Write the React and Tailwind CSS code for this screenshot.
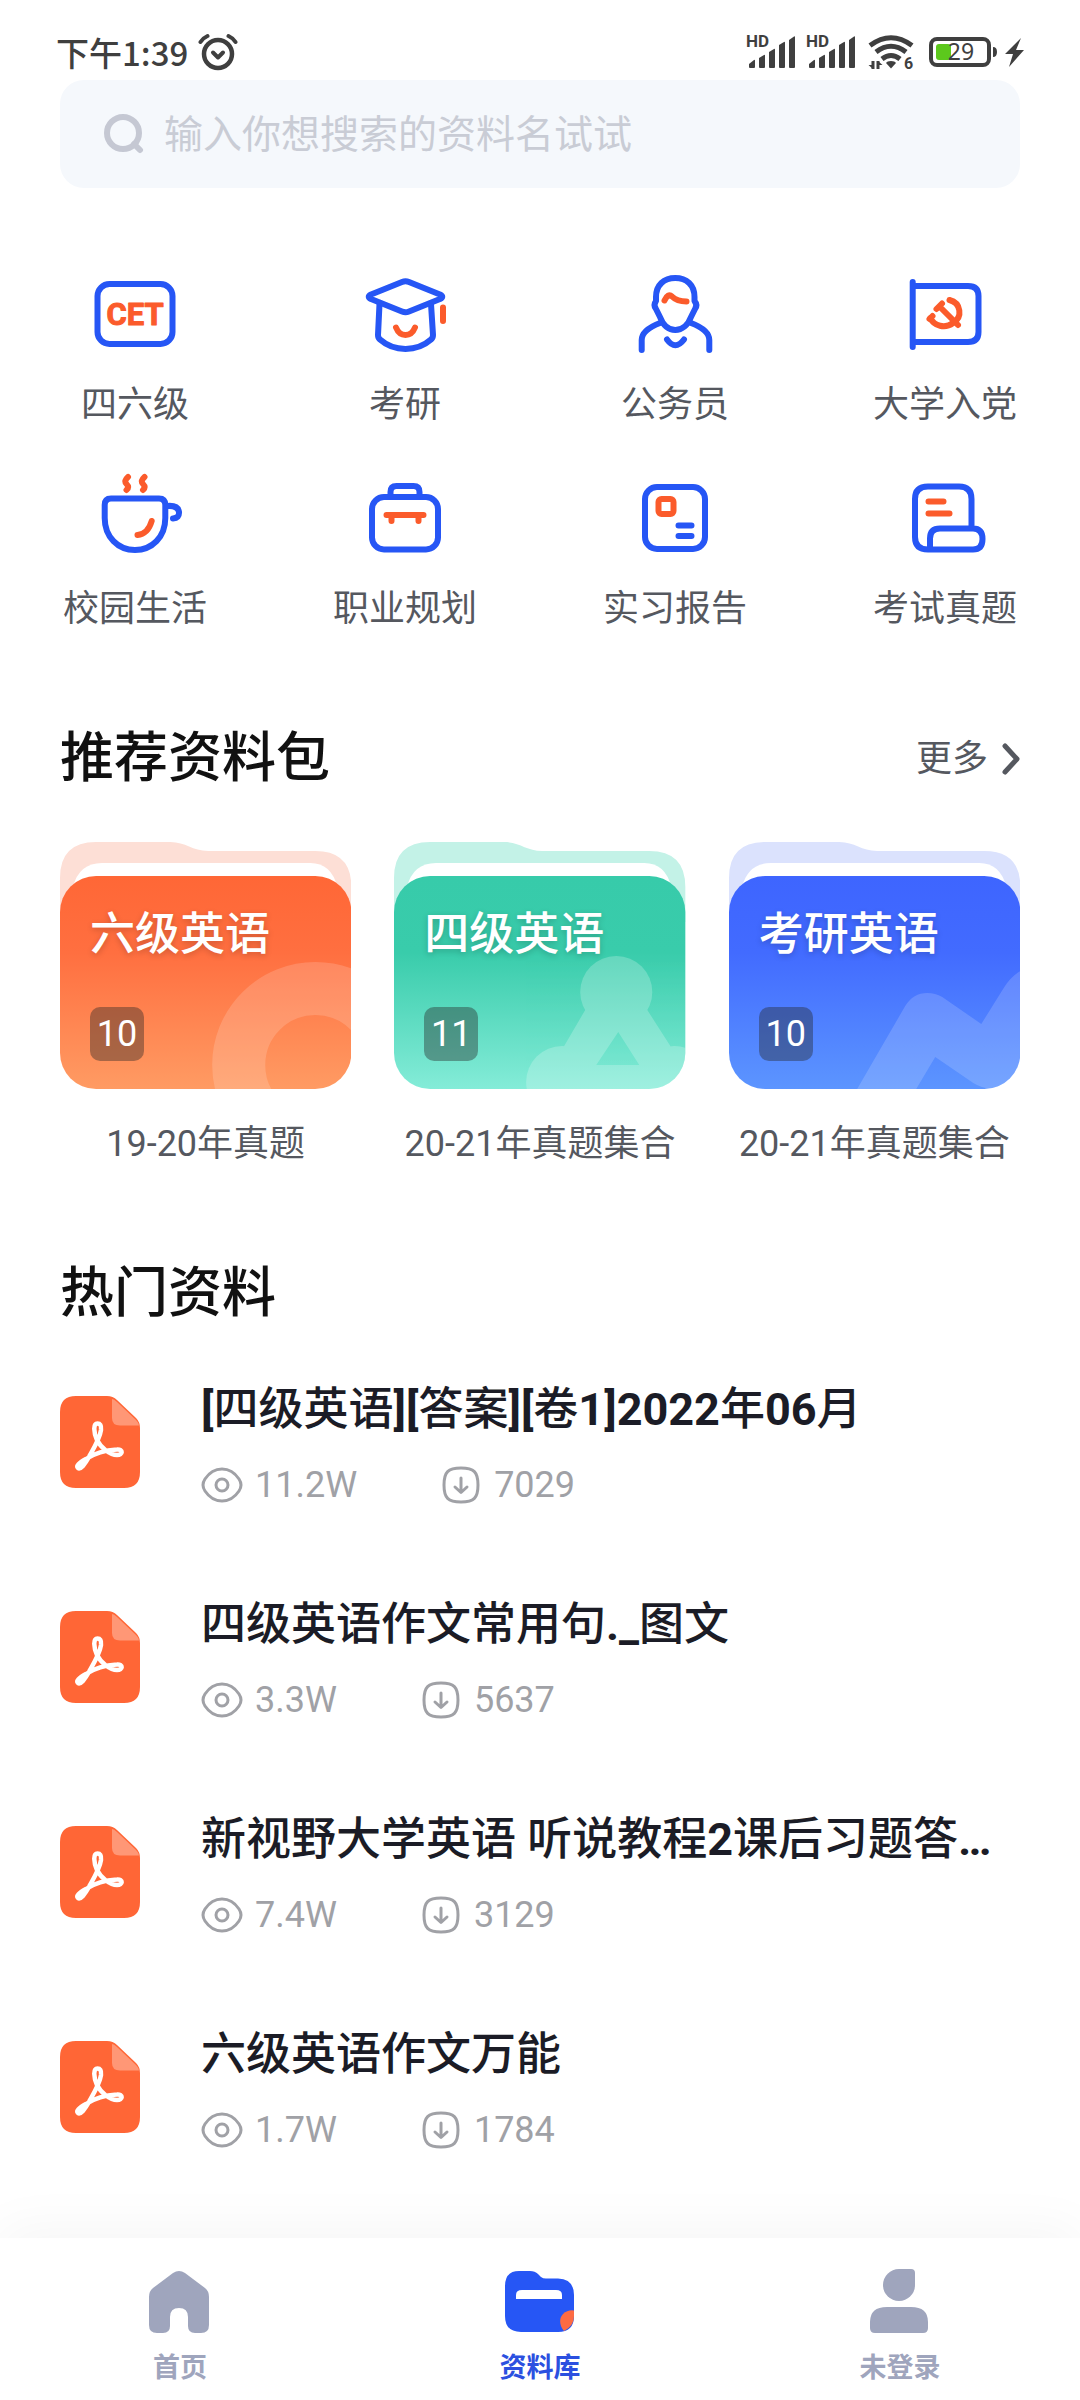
import React from 'react';

const BLUE = '#2656f5';
const ORANGE = '#fb5b2b';

// ---------- status bar ----------

const AlarmIcon = () => (
  <svg viewBox="0 0 40 38" className="h-[38px] w-10" fill="none" stroke="#3f3f3f" strokeLinecap="round" strokeLinejoin="round">
    <circle cx="20" cy="21" r="14" strokeWidth="4.500" />
    <path d="M15 19.500l5 5 5-5" strokeWidth="4" />
    <path d="M2.500 9Q5 5 9.500 3M37.500 9Q35 5 30.500 3" strokeWidth="4" />
  </svg>
);

const SignalIcon = () => (
  <svg viewBox="0 -8 50 50" className="h-[50px] w-[50px]" fill="#3f3f3f">
    <text x="0" y="12" fontFamily="Roboto, sans-serif" fontSize="17" fontWeight="700">HD</text>
    <path d="M3 29l5-4q1-.5 1 .5V32q0 1-1 1H4q-1 0-1-1z" />
    <path d="M13 23l5-3q1-.5 1 .5V32q0 1-1 1h-4q-1 0-1-1z" />
    <path d="M23 17l5-3q1-.5 1 .5V32q0 1-1 1h-4q-1 0-1-1z" />
    <path d="M33 10l5-3q1-.5 1 .5V32q0 1-1 1h-4q-1 0-1-1z" />
    <path d="M43 5l5-3.500q1-.5 1 .5V32q0 1-1 1h-4q-1 0-1-1z" />
  </svg>
);

const WifiIcon = () => (
  <svg viewBox="0 -8 46 50" className="h-[50px] w-[46px]" fill="none" stroke="#3f3f3f" strokeWidth="5">
    <path d="M2 10.500Q23-5 44 10.500M8 17Q23 5.500 38 17M14 24Q23 17 32 24" />
    <path d="M23 26q4 0 5 2l-5 5.500-5-5.500q1-2 5-2z" fill="#3f3f3f" stroke="none" />
    <path d="M5 26v8l-4.500-4H5M10 34v-8l4.500 4H10" fill="#3f3f3f" stroke="none" />
    <path d="M5 26v8M10 26v8" strokeWidth="3" />
    <text x="36" y="34" fill="#3f3f3f" stroke="none" fontFamily="Roboto, sans-serif" fontSize="16" fontWeight="700">6</text>
  </svg>
);

const BatteryIcon = () => (
  <svg viewBox="0 0 96 34" className="h-[34px] w-24">
    <rect x="2" y="4" width="58" height="26" rx="6" fill="none" stroke="#3f3f3f" strokeWidth="4" />
    <rect x="7" y="9" width="15" height="16" rx="3" fill="#5cc81c" />
    <path d="M64 12q4 0 4 5t-4 5z" fill="#3f3f3f" />
    <text x="32" y="25" textAnchor="middle" fill="#3f3f3f" fontFamily="Noto Sans, sans-serif" fontSize="23">29</text>
    <path d="M92 3L76 19h8l-4 13 15-17h-8z" fill="#3f3f3f" />
  </svg>
);

const StatusBar = () => (
  <div className="flex h-20 items-center justify-between pt-6 pr-[55px] pl-14 text-[#3f3f3f]">
    <div className="flex items-center gap-[10px] text-[33px] leading-[50px] font-medium">
      <span className="font-['Noto_Sans_CJK_SC',sans-serif]">下午1:39</span>
      <AlarmIcon />
    </div>
    <div className="flex items-center">
      <SignalIcon />
      <span className="w-[10px]" />
      <SignalIcon />
      <span className="w-3" />
      <WifiIcon />
      <span className="w-[15px]" />
      <BatteryIcon />
    </div>
  </div>
);

// ---------- search ----------

const SearchBox = () => (
  <div className="px-[60px]">
    <label className="flex h-[108px] items-center gap-5 rounded-3xl bg-[#f5f8fc] px-11">
      <svg viewBox="0 1 40 40" className="h-10 w-10 shrink-0" fill="none" stroke="#c5c8d3" strokeWidth="6" strokeLinecap="round">
        <circle cx="19" cy="20" r="16" />
        <path d="M30 31l6 6" />
      </svg>
      <input
        type="text"
        aria-label="搜索"
        placeholder="输入你想搜索的资料名试试"
        className="min-w-0 flex-1 bg-transparent pt-[2px] text-[39px] leading-[56px] text-[#3f3f3f] outline-none placeholder:text-[#c9ccd5]"
      />
    </label>
  </div>
);

// ---------- categories ----------

const CategoryIcon = ({ children }) => (
  <svg
    viewBox="0 0 88 88"
    className="h-[88px] w-[88px] overflow-visible"
    fill="none"
    stroke={BLUE}
    strokeWidth="6"
    strokeLinecap="round"
    strokeLinejoin="round"
  >
    {children}
  </svg>
);

const categories = [
  {
    name: '四六级',
    icon: (
      <>
        <rect x="6.500" y="14" width="75" height="60" rx="12" />
        <text x="44" y="55" textAnchor="middle" fill={ORANGE} stroke={ORANGE} strokeWidth="1" fontFamily="Roboto, sans-serif" fontSize="31" fontWeight="700">CET</text>
      </>
    ),
  },
  {
    name: '考研',
    icon: (
      <>
        <path d="M18.500 34L17 65Q17 68 19 69.500C33 82 56 82 70 69.500Q72 68 72 65L70 34" />
        <path fill="#fff" d="M41 12Q44.500 10.500 48 12L79 24.500Q83.500 26.700 79 29L48 41.500Q44.500 43 41 41.500L10 29Q5.500 26.700 10 24.500Z" />
        <path stroke={ORANGE} d="M35 57.500Q38 65 44.500 65T54 57.500M82 37.500v13.500" />
      </>
    ),
  },
  {
    name: '公务员',
    icon: (
      <>
        <path d="M25 31V27C25 15 33 8 44.300 8S63.500 15 63.500 27V31Q67 35 64 39L60 47C57 55 51 60 44.300 60S32 55 29 47L25 39Q22 35 25 31Z" />
        <path d="M29 53Q10.700 60 10.700 70V80M60 53Q78.300 60 78.300 70V80M36 69.500Q44.300 81 53 69.500" />
        <path stroke={ORANGE} d="M33.500 30.500Q37 23 41 26.500Q46 31.500 55.500 31.500" />
      </>
    ),
  },
  {
    name: '大学入党',
    icon: (
      <>
        <path d="M11.700 12V77M11.700 16H67Q77.500 16 77.500 26V62Q77.500 72 67 72H11.700" />
        <path stroke={ORANGE} d="M48.500 30C60 33 62 47 52 53C44 59 33 56 29.500 48" />
        <path stroke={ORANGE} strokeWidth="6" d="M35.500 39L41 33.500M39 37L57 55M28.500 49l3-3" />
      </>
    ),
  },
  {
    name: '校园生活',
    icon: (
      <>
        <path d="M20 24.500H68Q74.300 24.500 74.300 31V44C74.300 63 61 76 44 76S13.700 63 13.700 44V31Q13.700 24.500 20 24.500Z" />
        <path d="M76 32Q87 31 88 38Q88.500 44 82 44.500" />
        <path stroke={ORANGE} d="M37 3q-4.500 4-1.500 7t0 6M53.500 3q-4.500 4-1.500 7t0 6M60.700 47Q57 60 46.500 61" />
      </>
    ),
  },
  {
    name: '职业规划',
    icon: (
      <>
        <rect x="11" y="23" width="66" height="52.500" rx="12" />
        <path d="M29.500 22V18Q29.500 12 35.500 12H52.500Q58.500 12 58.500 18V22" />
        <path stroke={ORANGE} d="M25.500 41H62.500M30.500 42v5M57.500 42v5" />
      </>
    ),
  },
  {
    name: '实习报告',
    icon: (
      <>
        <rect x="14" y="13" width="60" height="62" rx="12" />
        <rect x="27.500" y="25" width="15" height="15" rx="3" stroke={ORANGE} />
        <path d="M47.500 51.500H60.500M47.500 62H60.500" />
      </>
    ),
  },
  {
    name: '考试真题',
    icon: (
      <>
        <path d="M70.500 54V25Q70.500 12.500 58 12.500H27Q14 12.500 14 25V63Q14 75.500 27 75.500H72Q81.500 75.500 81.500 65T72 54.500H39Q29 54.500 29 64.500V75" />
        <path stroke={ORANGE} d="M27.500 27.500H42.500M27.500 39.500H48.500" />
      </>
    ),
  },
];

const Categories = () => (
  <nav className="mt-[82px] grid grid-cols-4 gap-y-11">
    {categories.map((c) => (
      <a key={c.name} href="#" className="flex flex-col items-center gap-[22px] text-[36px] leading-[50px] text-[#55585f]">
        <CategoryIcon>{c.icon}</CategoryIcon>
        {c.name}
      </a>
    ))}
  </nav>
);

// ---------- recommended packs ----------

const packs = [
  {
    id: 'cet6',
    title: '六级英语',
    count: 10,
    desc: '19-20年真题',
    back: '#fddfd6',
    stops: ['#ff6736', '#ff6f40', '#ff9b63'],
    art: <circle cx="255" cy="223" r="76.500" fill="none" stroke="#fff" strokeWidth="53" opacity=".16" />,
  },
  {
    id: 'cet4',
    title: '四级英语',
    count: 11,
    desc: '20-21年真题集合',
    back: '#c3f2e7',
    stops: ['#37cbaa', '#39ccab', '#84ecd8'],
    art: (
      <g fill="#fff" opacity=".22">
        <circle cx="222" cy="150" r="36" />
        <circle cx="168" cy="240" r="36" />
        <circle cx="280" cy="240" r="36" />
        <path fillRule="evenodd" d="M191 168L170 204V250H280L276 204L253 168ZM224 190L202 223H245Z" />
      </g>
    ),
  },
  {
    id: 'kaoyan',
    title: '考研英语',
    count: 10,
    desc: '20-21年真题集合',
    back: '#dbe2fd',
    stops: ['#3e65ff', '#426bff', '#5c95ff'],
    art: (
      <path
        fill="#fff"
        opacity=".16"
        d="M128 247L176 164Q184 151 198 151Q206 151 213 155L252 182L275 145Q282 134 291 129V247H262Q252 246 244 241L206 215L187 247Z"
      />
    ),
  },
];

const FolderArt = ({ pack }) => (
  <svg viewBox="0 0 291 247" preserveAspectRatio="none" className="absolute inset-0 h-full w-full">
    <defs>
      <linearGradient id={`fill-${pack.id}`} x1="0" y1="0" x2="0" y2="1">
        <stop offset="0" stopColor={pack.stops[0]} />
        <stop offset=".36" stopColor={pack.stops[1]} />
        <stop offset="1" stopColor={pack.stops[2]} />
      </linearGradient>
      <clipPath id={`clip-${pack.id}`}>
        <rect y="34" width="291" height="213" rx="36" />
      </clipPath>
    </defs>
    <path fill={pack.back} d="M0 80V36Q0 0 36 0H110C126 0 132 9 148 9H255Q291 9 291 45V80Z" />
    <path fill="#fff" d="M13 60V45Q19 21 42 21H250Q271 21 277 45V60Z" />
    <rect y="34" width="291" height="213" rx="36" fill={`url(#fill-${pack.id})`} />
    <g clipPath={`url(#clip-${pack.id})`}>{pack.art}</g>
  </svg>
);

const PackCard = ({ pack }) => (
  <a href="#" className="block">
    <div className="relative flex h-[247px] flex-col items-start justify-between px-[30px] pt-[62px] pb-7 text-white">
      <FolderArt pack={pack} />
      <h3 className="relative text-[45px] leading-[62px] font-medium [text-shadow:0_2px_6px_rgba(0,0,0,0.2)]">
        {pack.title}
      </h3>
      <span className="relative flex h-[54px] min-w-[54px] items-center justify-center rounded-[10px] bg-[#252525]/40 text-[36px] leading-[50px]">
        {pack.count}
      </span>
    </div>
    <p className="mt-[30px] text-center text-[36px] leading-[50px] whitespace-nowrap text-[#55585f]">{pack.desc}</p>
  </a>
);

const Recommended = () => (
  <section className="mt-[89px] px-[60px]">
    <div className="flex items-center justify-between">
      <h2 className="text-[54px] leading-[72px] font-medium text-[#111]">推荐资料包</h2>
      <a href="#" className="flex items-center gap-[14px] text-[36px] leading-[50px] text-[#55585f]">
        更多
        <svg viewBox="0 0 18 32" className="h-8 w-[18px]" fill="none" stroke="#55585f" strokeWidth="5" strokeLinecap="round" strokeLinejoin="round">
          <path d="M3 3l12 13L3 29" />
        </svg>
      </a>
    </div>
    <div className="mt-[47px] grid grid-cols-3 gap-[43px]">
      {packs.map((p) => (
        <PackCard key={p.id} pack={p} />
      ))}
    </div>
  </section>
);

// ---------- hot documents ----------

const docs = [
  { title: '[四级英语][答案][卷1]2022年06月', views: '11.2W', downloads: '7029' },
  { title: '四级英语作文常用句._图文', views: '3.3W', downloads: '5637' },
  { title: '新视野大学英语 听说教程2课后习题答…', views: '7.4W', downloads: '3129' },
  { title: '六级英语作文万能', views: '1.7W', downloads: '1784' },
];

const PdfIcon = () => (
  <svg viewBox="0 0 80 92" className="mt-4 h-[92px] w-20 shrink-0">
    <path fill="#ff6636" d="M16 0H47Q53 0 57 4L76 22Q80 26 80 32V76Q80 92 64 92H16Q0 92 0 76V16Q0 0 16 0Z" />
    <path fill="#ff9776" d="M52 3Q54 3 57 6L76 24Q79 27 79 29.500H60Q52 29.500 52 22Z" />
    <path
      fill="none"
      stroke="#fff"
      strokeWidth="4.500"
      strokeLinejoin="round"
      d="M37.500 27.500C33 27.500 33.500 36 37 44C41 52 50 59 57 59C63 59 63.500 53 57 53.500C46 54 35 57 26 63C19 67 15.500 70 18 72C20.500 74 25 68 29 61C34 52 40 42 41 34C41.500 29 40 27.500 37.500 27.500Z"
    />
  </svg>
);

const EyeIcon = () => (
  <svg viewBox="0 0 42 38" className="h-[38px] w-[42px]" fill="none" stroke="#a0a1a6" strokeWidth="3">
    <path d="M21 3C29 3 34 7 38 13Q42 19 38 25C34 31 29 35 21 35S8 31 4 25Q0 19 4 13C8 7 13 3 21 3Z" />
    <circle cx="21" cy="19" r="6" />
  </svg>
);

const DownloadIcon = () => (
  <svg viewBox="0 0 38 38" className="h-[38px] w-[38px]" fill="none" stroke="#a0a1a6" strokeWidth="3" strokeLinecap="round" strokeLinejoin="round">
    <path d="M19 2C32 2 36 6 36 19S32 36 19 36S2 32 2 19S6 2 19 2Z" />
    <path d="M19 12V26M13 21l6 5.500L25 21" />
  </svg>
);

// latin runs are set bolder than the chinese around them
const DocTitle = ({ text }) => (
  <h3 className="truncate text-[45px] leading-[60px] font-medium text-[#1b1c26]">
    {text.split(/([\x21-\x7e…]+)/).map((part, i) =>
      i % 2 ? <span key={i} className="font-bold">{part}</span> : part
    )}
  </h3>
);

const DocRow = ({ doc }) => (
  <li>
    <a href="#" className="flex items-start gap-[61px]">
      <PdfIcon />
      <div className="min-w-0 flex-1">
        <DocTitle text={doc.title} />
        <div className="mt-5 flex items-center gap-[85px] text-[36px] leading-[50px] text-[#a0a1a6]">
          <span className="flex items-center gap-3">
            <EyeIcon />
            {doc.views}
          </span>
          <span className="flex items-center gap-[14px]">
            <DownloadIcon />
            {doc.downloads}
          </span>
        </div>
      </div>
    </a>
  </li>
);

const HotDocs = () => (
  <section className="mt-[89px] px-[60px] pb-20">
    <h2 className="text-[54px] leading-[72px] font-medium text-[#111]">热门资料</h2>
    <ul className="mt-[50px] flex flex-col gap-[85px]">
      {docs.map((d) => (
        <DocRow key={d.title} doc={d} />
      ))}
    </ul>
  </section>
);

// ---------- bottom tabs ----------

const tabs = [
  {
    name: '首页',
    icon: (
      <path
        fill="#9fa5bd"
        d="M30 7Q36 3 42 7L62 22Q66 25 66 31V59Q66 67 58 67H52Q45 67 45 60V51Q45 42 36 42T27 51V60Q27 67 20 67H14Q6 67 6 59V31Q6 25 10 22Z"
      />
    ),
  },
  {
    name: '资料库',
    active: true,
    icon: (
      <>
        <path fill={BLUE} d="M16 5H27Q32 5 35 8L38 11Q40 12.500 43 12.500H55Q71 13 71 29V50Q71 66 55 66H18Q2 66 2 50V20Q2 5 16 5Z" />
        <path fill="#fff" d="M19 24H53Q59 24 59 29V33H13V29Q13 24 19 24Z" />
        <path fill="#fd6b43" d="M71 44.500V50Q71 60 61 65C56 59 56 52 60 48Q65 43.500 71 44.500Z" />
      </>
    ),
  },
  {
    name: '未登录',
    icon: (
      <>
        <path fill="#9fa5bd" d="M36 3H48Q52 3 52 7V19A16 16 0 1 1 36 3Z" />
        <path fill="#9fa5bd" d="M24 41H48Q65 41 65 56V62Q65 67 60 67H12Q7 67 7 62V56Q7 41 24 41Z" />
      </>
    ),
  },
];

const TabBar = () => (
  <nav className="sticky bottom-0 mt-auto grid grid-cols-3 bg-white pt-7 pb-3 shadow-[0_-10px_50px_rgba(0,0,0,0.04)]">
    {tabs.map((t) => (
      <button
        key={t.name}
        type="button"
        className={`flex flex-col items-center gap-[10px] text-[27px] leading-10 font-bold ${t.active ? 'text-[#2b50e0]' : 'text-[#9fa5bd]'}`}
      >
        <svg viewBox="1 0 72 72" className="h-[72px] w-[72px]">{t.icon}</svg>
        {t.name}
      </button>
    ))}
  </nav>
);

const App = () => {
  return (
    <div className="flex min-h-screen flex-col bg-white font-[Roboto,'Noto_Sans_CJK_SC',sans-serif]">
      <StatusBar />
      <SearchBox />
      <Categories />
      <Recommended />
      <HotDocs />
      <TabBar />
    </div>
  );
};

export default App;
